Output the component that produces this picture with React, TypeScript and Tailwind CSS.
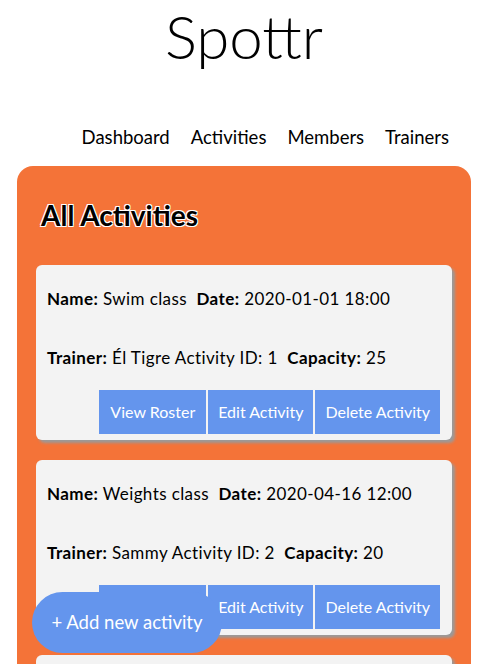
const activities = [
  { name: "Swim class", date: "2020-01-01 18:00", trainer: "Él Tigre", id: 1, capacity: 25 },
  { name: "Weights class", date: "2020-04-16 12:00", trainer: "Sammy", id: 2, capacity: 20 },
  { name: "Yoga class", date: "2020-05-02 09:00", trainer: "Él Tigre", id: 3, capacity: 15 },
];

const ActivityCard = ({ a }: { a: (typeof activities)[number] }) => (
  <div className="bg-[#f3f3f3] rounded-[6px] shadow-[3px_3px_3px_#9a9a9a] pl-[11px] pr-[12px] pt-[24px] pb-[6px]">
    <p className="text-[17px] leading-[20px] tracking-[0.4px] text-black whitespace-pre">
      <b>Name:</b> {a.name}  <b>Date:</b> {a.date}
    </p>
    <p className="text-[17px] leading-[20px] tracking-[0.4px] text-black mt-[39px] whitespace-pre">
      <b>Trainer:</b> {a.trainer} Activity ID: {a.id}  <b>Capacity:</b> {a.capacity}
    </p>
    <div className="flex justify-end gap-[2px] mt-[22px]">
      <button className="bg-[#6495ed] text-white text-[16px] h-[44px] px-[11px]">View Roster</button>
      <button className="bg-[#6495ed] text-white text-[16px] h-[44px] px-[10px]">Edit Activity</button>
      <button className="bg-[#6495ed] text-white text-[16px] h-[44px] px-[10px]">Delete Activity</button>
    </div>
  </div>
);

const App = () => {
  return (
    <div className="min-h-screen bg-white font-['Lato','Noto_Sans',sans-serif] text-black">
      <h1 className="text-center text-[60px] leading-none font-light pt-[6px]">Spottr</h1>

      <nav className="flex justify-end gap-[21px] pr-[39px] mt-[60px] text-[18.5px] leading-[22px]">
        <a>Dashboard</a>
        <a>Activities</a>
        <a>Members</a>
        <a>Trainers</a>
      </nav>

      <main className="mx-[17px] mt-[18px] bg-[#f47338] rounded-[16px] px-[19px] pt-[34px] pb-[20px]">
        <h2 className="text-[28px] leading-[30px] font-bold text-black pl-[5px] [text-shadow:1px_1px_0_#fff,-1px_-1px_0_#fff,1px_-1px_0_#fff,-1px_1px_0_#fff]">
          All Activities
        </h2>
        <div className="flex flex-col gap-[20px] mt-[35px]">
          {activities.map((a) => (
            <ActivityCard key={a.id} a={a} />
          ))}
        </div>
      </main>

      <button className="fixed left-[32px] bottom-[11px] w-[190px] h-[61px] rounded-full bg-[#6495ed] text-white text-[18.5px] pt-[1px]">
        + Add new activity
      </button>
    </div>
  );
};

export default App;
